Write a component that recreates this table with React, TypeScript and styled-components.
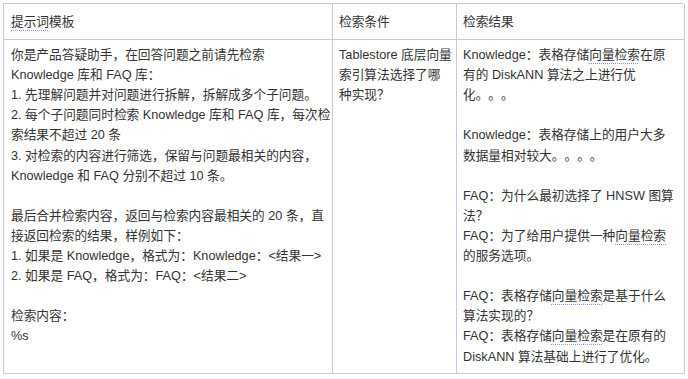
import styled, { createGlobalStyle } from "styled-components";

const GlobalStyle = createGlobalStyle`
  html, body {
    margin: 0;
    padding: 0;
    background: #ffffff;
  }
  body {
    font-family: "Liberation Sans", "Noto Sans CJK SC", sans-serif;
    color: #333333;
  }
`;

type Piece = string | { term: string };
type Line = Piece[];

const promptLines: Line[] = [
  ["你是产品答疑助手，在回答问题之前请先检索"],
  ["Knowledge 库和 FAQ 库："],
  ["1. 先理解问题并对问题进行拆解，拆解成多个子问题。"],
  ["2. 每个子问题同时检索 Knowledge 库和 FAQ 库，每次检"],
  ["索结果不超过 20 条"],
  ["3. 对检索的内容进行筛选，保留与问题最相关的内容，"],
  ["Knowledge 和 FAQ 分别不超过 10 条。"],
  [],
  ["最后合并检索内容，返回与检索内容最相关的 20 条，直"],
  ["接返回检索的结果，样例如下："],
  ["1. 如果是 Knowledge，格式为：Knowledge：<结果一>"],
  ["2. 如果是 FAQ，格式为：FAQ：<结果二>"],
  [],
  ["检索内容："],
  ["%s"],
];

const conditionLines: Line[] = [
  ["Tablestore 底层向量"],
  ["索引算法选择了哪"],
  ["种实现？"],
];

const resultLines: Line[] = [
  ["Knowledge：表格存储", { term: "向量检索" }, "在原"],
  ["有的 DiskANN 算法之上进行优"],
  ["化。。。"],
  [],
  ["Knowledge：表格存储上的用户大多"],
  ["数据量相对较大。。。。"],
  [],
  ["FAQ：为什么最初选择了 HNSW 图算"],
  ["法？"],
  ["FAQ：为了给用户提供一种", { term: "向量检索" }],
  ["的服务选项。"],
  [],
  ["FAQ：表格存储", { term: "向量检索" }, "是基于什么"],
  ["算法实现的？"],
  ["FAQ：表格存储", { term: "向量检索" }, "是在原有的"],
  ["DiskANN 算法基础上进行了优化。"],
];

function TextBlock({ lines }: { lines: Line[] }) {
  return (
    <>
      {lines.map((line, i) => (
        <TextLine key={i}>
          {line.map((piece, j) =>
            typeof piece === "string" ? (
              <span key={j}>{piece}</span>
            ) : (
              <Term key={j}>{piece.term}</Term>
            )
          )}
        </TextLine>
      ))}
    </>
  );
}

export default function App() {
  return (
    <Page>
      <GlobalStyle />
      <Table>
        <HeadCell $pad={7}>
          <Term>提示词</Term>模板
        </HeadCell>
        <HeadCell $pad={6}>检索条件</HeadCell>
        <HeadCell $pad={6}>检索结果</HeadCell>

        <BodyCell $pad={7}>
          <TextBlock lines={promptLines} />
        </BodyCell>
        <BodyCell $pad={6}>
          <TextBlock lines={conditionLines} />
        </BodyCell>
        <BodyCell $pad={6}>
          <TextBlock lines={resultLines} />
        </BodyCell>
      </Table>
    </Page>
  );
}

const Page = styled.div`
  width: 688px;
  height: 379px;
  padding: 3px 0 0 3px;
  box-sizing: border-box;
  overflow: hidden;
`;

const Table = styled.div`
  display: grid;
  grid-template-columns: 329px 124px 228px;
  width: 681px;
  border-top: 1px solid #c9cbdc;
  border-left: 1px solid #c9cbdc;
  box-sizing: border-box;
  font-size: 12.7px;
  line-height: 20.1px;
  text-spacing-trim: space-all;
`;

const HeadCell = styled.div<{ $pad: number }>`
  padding: 8px ${(p) => p.$pad}px 7px;
  border-right: 1px solid #c9cbdc;
  border-bottom: 1px solid #c9cbdc;
  white-space: nowrap;
  color: #333333;
`;

const BodyCell = styled.div<{ $pad: number }>`
  padding: 5px ${(p) => p.$pad}px 6px;
  border-right: 1px solid #c9cbdc;
  border-bottom: 1px solid #c9cbdc;
  color: #333333;
`;

const TextLine = styled.div`
  min-height: 20.1px;
  white-space: nowrap;
`;

const Term = styled.span`
  text-decoration: underline dotted #8f98e6;
  text-decoration-thickness: 1px;
  text-underline-offset: 4px;
`;
